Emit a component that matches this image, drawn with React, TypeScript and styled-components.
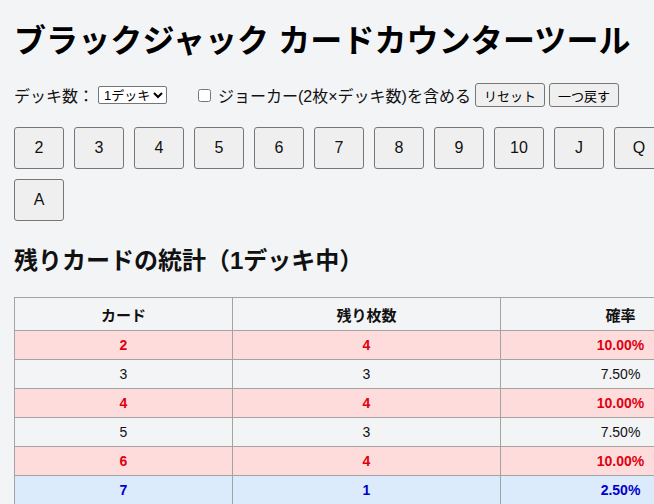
import React, { useState } from "react";
import styled, { createGlobalStyle } from "styled-components";

const GlobalStyle = createGlobalStyle`
  html, body {
    margin: 0;
    padding: 0;
    background: #f3f4f6;
    overflow: hidden;
  }
  body {
    font-family: "Liberation Sans", Arial, "Noto Sans CJK JP", sans-serif;
    color: #111;
  }
`;

const Page = styled.div`
  padding: 0 14px;
  width: 760px;
`;

const Title = styled.h1`
  margin: 21px 0 0;
  font-size: 32px;
  line-height: 40px;
  font-weight: 700;
  color: #000;
  letter-spacing: 0.1px;
`;

const Controls = styled.div`
  display: flex;
  align-items: center;
  height: 24px;
  margin-top: 22px;
  font-size: 16px;
`;

const Label = styled.span`
  white-space: nowrap;
`;

const Select = styled.select`
  margin-left: 4px;
  width: 69px;
  height: 18px;
  font-family: "Liberation Sans", Arial, "Noto Sans CJK JP", sans-serif;
  font-size: 13px;
  padding: 0 0 0 1px;
  border: 1px solid #767676;
  border-radius: 2px;
  background: #fff;
  color: #000;
`;

const CheckLabel = styled.label`
  display: flex;
  align-items: center;
  margin-left: 27px;
  white-space: nowrap;
`;

const Check = styled.input`
  width: 13px;
  height: 13px;
  margin: 0 7px 0 4px;
`;

const SmallButton = styled.button<{ $ml: number }>`
  height: 24px;
  margin-left: ${(p) => p.$ml}px;
  padding: 0 8px;
  font-family: "Liberation Sans", Arial, "Noto Sans CJK JP", sans-serif;
  font-size: 13px;
  color: #000;
  background: #efefef;
  border: 1px solid #767676;
  border-radius: 3px;
  white-space: nowrap;
`;

const CardGrid = styled.div`
  display: flex;
  flex-wrap: wrap;
  gap: 10px;
  width: 740px;
  margin-top: 20px;
`;

const CardButton = styled.button`
  width: 50px;
  height: 42px;
  font-family: "Liberation Sans", Arial, sans-serif;
  font-size: 16px;
  color: #111;
  background: #efefef;
  border: 1px solid #767676;
  border-radius: 3px;
  padding: 0;
`;

const Heading = styled.h2`
  margin: 24px 0 0;
  font-size: 24px;
  line-height: 32px;
  font-weight: 700;
  color: #111;
`;

const Table = styled.table`
  margin-top: 20px;
  border-collapse: collapse;
  table-layout: fixed;
  width: 727px;
`;

const Th = styled.th`
  border: 1px solid #a3a3a3;
  height: 32px;
  padding: 0 8px;
  font-size: 15px;
  font-weight: 700;
  text-align: center;
  color: #111;
`;

type Level = "high" | "low" | "normal";

const Row = styled.tr<{ $level: Level }>`
  background: ${(p) =>
    p.$level === "high" ? "#ffdcdc" : p.$level === "low" ? "#dcebfc" : "transparent"};
  color: ${(p) =>
    p.$level === "high" ? "#e0000f" : p.$level === "low" ? "#0000c8" : "#111"};
  font-weight: ${(p) => (p.$level === "normal" ? 400 : 700)};
`;

const Td = styled.td`
  border: 1px solid #a3a3a3;
  height: 28px;
  padding: 0 8px;
  font-size: 14px;
  text-align: center;
`;

const cards = ["2", "3", "4", "5", "6", "7", "8", "9", "10", "J", "Q", "K", "A"];
const remaining: Record<string, number> = {
  "2": 4, "3": 3, "4": 4, "5": 3, "6": 4, "7": 1,
  "8": 3, "9": 3, "10": 3, J: 3, Q: 3, K: 3, A: 3,
};

export default function App() {
  const [counts] = useState(remaining);
  const total = Object.values(counts).reduce((a, b) => a + b, 0);
  return (
    <>
      <GlobalStyle />
      <Page>
        <Title>ブラックジャック カードカウンターツール</Title>
        <Controls>
          <Label>デッキ数：</Label>
          <Select defaultValue="1">
            <option value="1">1デッキ</option>
            <option value="2">2デッキ</option>
            <option value="6">6デッキ</option>
            <option value="8">8デッキ</option>
          </Select>
          <CheckLabel>
            <Check type="checkbox" />
            ジョーカー(2枚×デッキ数)を含める
          </CheckLabel>
          <SmallButton $ml={4}>リセット</SmallButton>
          <SmallButton $ml={4}>一つ戻す</SmallButton>
        </Controls>
        <CardGrid>
          {cards.map((c) => (
            <CardButton key={c}>{c}</CardButton>
          ))}
        </CardGrid>
        <Heading>残りカードの統計（1デッキ中）</Heading>
        <Table>
          <colgroup>
            <col style={{ width: 218 }} />
            <col style={{ width: 268 }} />
            <col style={{ width: 240 }} />
          </colgroup>
          <thead>
            <tr>
              <Th>カード</Th>
              <Th>残り枚数</Th>
              <Th>確率</Th>
            </tr>
          </thead>
          <tbody>
            {cards.map((c) => {
              const n = counts[c];
              const level: Level = n >= 4 ? "high" : n <= 1 ? "low" : "normal";
              return (
                <Row key={c} $level={level}>
                  <Td>{c}</Td>
                  <Td>{n}</Td>
                  <Td>{((n / total) * 100).toFixed(2)}%</Td>
                </Row>
              );
            })}
          </tbody>
        </Table>
      </Page>
    </>
  );
}
